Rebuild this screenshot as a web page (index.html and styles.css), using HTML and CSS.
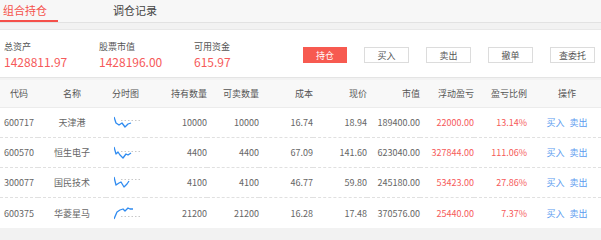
FILE: index.html
```html
<!DOCTYPE html>
<html lang="zh">
<head>
    <meta charset="UTF-8">
    <title>组合持仓</title>
    <link rel="stylesheet" href="styles.css">
</head>
<body>

<div class="tabs">
    <a class="tab active">组合持仓</a>
    <a class="tab">调仓记录</a>
</div>

<div class="summary">
    <div class="stat">
        <div class="stat-label">总资产</div>
        <div class="stat-value">1428811.97</div>
    </div>
    <div class="stat">
        <div class="stat-label">股票市值</div>
        <div class="stat-value">1428196.00</div>
    </div>
    <div class="stat">
        <div class="stat-label">可用资金</div>
        <div class="stat-value">615.97</div>
    </div>
    <div class="actions">
        <button class="btn btn-primary">持仓</button>
        <button class="btn">买入</button>
        <button class="btn">卖出</button>
        <button class="btn">撤单</button>
        <button class="btn">查委托</button>
    </div>
</div>

<table class="holdings">
    <colgroup>
        <col class="w-code"><col class="w-name"><col class="w-chart">
        <col class="w-hold"><col class="w-sell"><col class="w-num">
        <col class="w-num"><col class="w-val"><col class="w-num">
        <col class="w-val"><col class="w-op">
    </colgroup>
    <thead>
        <tr>
            <th class="c">代码</th>
            <th class="c">名称</th>
            <th class="c">分时图</th>
            <th class="r">持有数量</th>
            <th class="r">可卖数量</th>
            <th class="r">成本</th>
            <th class="r">现价</th>
            <th class="r">市值</th>
            <th class="r">浮动盈亏</th>
            <th class="r">盈亏比例</th>
            <th class="c op">操作</th>
        </tr>
    </thead>
    <tbody>
        <tr>
            <td class="c">600717</td>
            <td class="c">天津港</td>
            <td class="c"><svg class="spark" width="26" height="14" viewBox="0 0 26 14"><line x1="7" y1="4.5" x2="26" y2="4.5" class="base"/><polyline points="0,1 2,7 5,9 8,7 11,11 14,8 17,7"/></svg></td>
            <td class="r">10000</td>
            <td class="r">10000</td>
            <td class="r">16.74</td>
            <td class="r">18.94</td>
            <td class="r">189400.00</td>
            <td class="r red">22000.00</td>
            <td class="r red">13.14%</td>
            <td class="c op"><a>买入</a><a>卖出</a></td>
        </tr>
        <tr>
            <td class="c">600570</td>
            <td class="c">恒生电子</td>
            <td class="c"><svg class="spark" width="26" height="14" viewBox="0 0 26 14"><line x1="7" y1="5.5" x2="26" y2="5.5" class="base"/><polyline points="0,1 2,8 4,6 6,9 9,12 12,8 14,9 17,7"/></svg></td>
            <td class="r">4400</td>
            <td class="r">4400</td>
            <td class="r">67.09</td>
            <td class="r">141.60</td>
            <td class="r">623040.00</td>
            <td class="r red">327844.00</td>
            <td class="r red">111.06%</td>
            <td class="c op"><a>买入</a><a>卖出</a></td>
        </tr>
        <tr>
            <td class="c">300077</td>
            <td class="c">国民技术</td>
            <td class="c"><svg class="spark" width="26" height="14" viewBox="0 0 26 14"><line x1="7" y1="3.5" x2="26" y2="3.5" class="base"/><polyline points="0,1 2,9 5,7 7,6 10,11 13,8 15,5"/></svg></td>
            <td class="r">4100</td>
            <td class="r">4100</td>
            <td class="r">46.77</td>
            <td class="r">59.80</td>
            <td class="r">245180.00</td>
            <td class="r red">53423.00</td>
            <td class="r red">27.86%</td>
            <td class="c op"><a>买入</a><a>卖出</a></td>
        </tr>
        <tr>
            <td class="c">600375</td>
            <td class="c">华菱星马</td>
            <td class="c"><svg class="spark" width="26" height="14" viewBox="0 0 26 14"><line x1="7" y1="10.5" x2="26" y2="10.5" class="base"/><polyline points="0,13 3,6 6,4 9,3 11,5 14,2 16,3 19,3"/></svg></td>
            <td class="r">21200</td>
            <td class="r">21200</td>
            <td class="r">16.28</td>
            <td class="r">17.48</td>
            <td class="r">370576.00</td>
            <td class="r red">25440.00</td>
            <td class="r red">7.37%</td>
            <td class="c op"><a>买入</a><a>卖出</a></td>
        </tr>
    </tbody>
</table>

</body>
</html>
```

FILE: styles.css
```css
/* Общие стили */
body {
    margin: 0;
    background: #f2f2f2;
    font-family: "Microsoft YaHei", "Noto Sans CJK SC", sans-serif;
    color: #666;
}

/* Вкладки */
.tabs {
    display: flex;
    height: 22px;
    background: #f7f7f7;
    border-bottom: 1px solid #e2e2e2;
}
.tab {
    box-sizing: border-box;
    height: 22px;
    line-height: 21px;
    font-size: 11px;
    color: #444;
    cursor: pointer;
}
.tab.active {
    width: 58px;
    padding-left: 3px;
    color: #f5504a;
    border-bottom: 2px solid #f5504a;
    margin-right: 55px;
}

/* Сводка */
.summary {
    display: flex;
    align-items: flex-start;
    margin-top: 6px;
    padding: 11px 6px 0 4px;
    box-sizing: border-box;
    background: #fff;
    border-top: 1px solid #e8e8e8;
    border-bottom: 1px solid #e4e4e4;
    height: 49px;
}
.stat {
    width: 95px;
}
.stat-label {
    font-size: 9px;
    line-height: 12px;
    color: #555;
}
.stat-value {
    margin-top: 1px;
    font-size: 12px;
    line-height: 16px;
    color: #f65a5a;
}
.actions {
    display: flex;
    gap: 17px;
    margin-left: auto;
    margin-top: 6px;
}
.btn {
    width: 45px;
    height: 16px;
    padding: 0;
    font-family: inherit;
    font-size: 9px;
    color: #555;
    background: #fff;
    border: 1px solid #dcdcdc;
}
.btn-primary {
    width: 44px;
    color: #fff;
    background: #f75a50;
    border-color: #f75a50;
}

/* Таблица */
.holdings {
    width: 601px;
    margin-top: 2px;
    border-collapse: collapse;
    table-layout: fixed;
    background: #fff;
    font-size: 9px;
}
.w-code { width: 38px; }
.w-name { width: 68px; }
.w-chart { width: 39px; }
.w-hold { width: 62px; }
.w-sell { width: 52px; }
.w-num { width: 54px; }
.w-val { width: 53px; }
.w-op { width: 74px; }

.holdings th {
    height: 27px;
    padding: 0;
    font-weight: normal;
    color: #555;
    background: #f8f8f8;
    border-bottom: 1px solid #ececec;
}
.holdings td {
    height: 29px;
    padding: 0;
    color: #666;
    border-bottom: 1px dashed #e0e0e0;
}
.holdings tbody tr:last-child td {
    border-bottom: none;
    height: 30px;
}
.holdings .c { text-align: center; }
.holdings .r { text-align: right; }
.holdings .op { padding-left: 6px; }
.holdings .red { color: #f65a5a; }
.holdings a {
    color: #5a9bef;
    cursor: pointer;
}
.holdings a + a {
    margin-left: 5px;
}

.spark {
    display: block;
    margin: 0 auto;
    transform: translateX(1px);
}
.spark polyline {
    fill: none;
    stroke: #2f8bf0;
    stroke-width: 1.3;
    stroke-linejoin: round;
}
.spark .base {
    stroke: #c8c8c8;
    stroke-width: 1;
    stroke-dasharray: 1.5 2;
}
```
